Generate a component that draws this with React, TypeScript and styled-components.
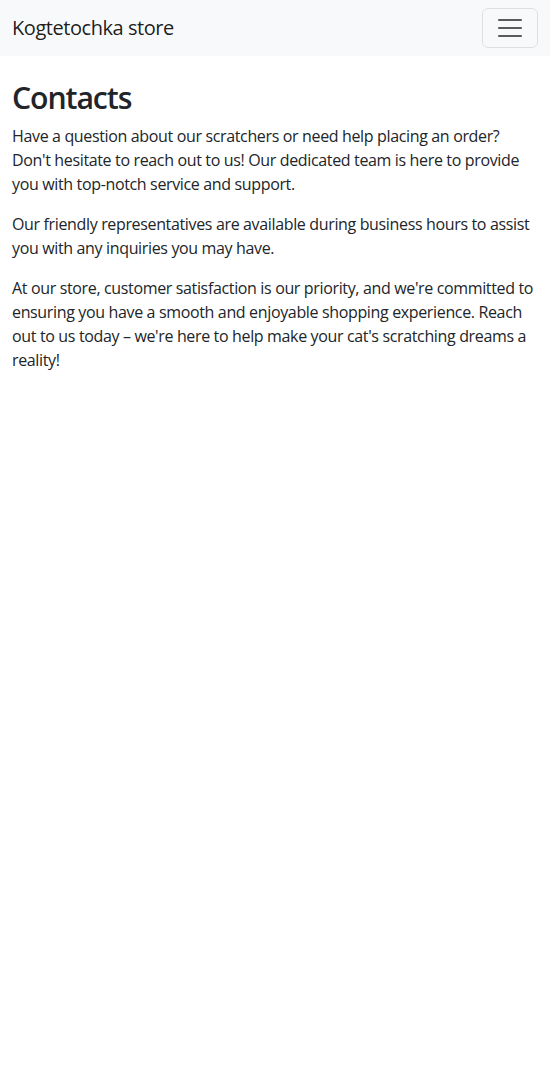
import React from "react";
import styled, { createGlobalStyle } from "styled-components";

const Global = createGlobalStyle`
  * { box-sizing: border-box; }
  body {
    margin: 0;
    font-family: "Segoe UI", "Open Sans", sans-serif;
    font-size: 16px;
    line-height: 1.5;
    color: #212529;
    background: #fff;
  }
`;

const Navbar = styled.nav`
  background: #f8f9fa;
  padding: 8px 0;
`;

const NavInner = styled.div`
  display: flex;
  align-items: center;
  justify-content: space-between;
  padding: 0 12px;
`;

const Brand = styled.a`
  font-size: 20px;
  line-height: 30px;
  padding: 5px 0;
  letter-spacing: -0.45px;
  color: rgba(0, 0, 0, 0.9);
  text-decoration: none;
`;

const Toggler = styled.button`
  width: 56px;
  height: 40px;
  padding: 4px 12px;
  border: 1px solid rgba(0, 0, 0, 0.1);
  border-radius: 6px;
  background: transparent;
  display: flex;
  align-items: center;
  justify-content: center;
`;

const Container = styled.main`
  padding: 0 12px;
  margin-top: 24px;
`;

const Title = styled.h1`
  margin: 0 0 8px;
  font-size: 30.25px;
  font-weight: 600;
  line-height: 1.2;
  letter-spacing: -1.1px;
`;

const Para = styled.p`
  margin: 0 0 16px;
  letter-spacing: -0.35px;
`;

export default function App() {
  return (
    <>
      <Global />
      <Navbar>
        <NavInner>
          <Brand href="#">Kogtetochka store</Brand>
          <Toggler aria-label="Toggle navigation">
            <svg width="30" height="30" viewBox="0 0 30 30">
              <path
                stroke="rgba(33,37,41,0.75)"
                strokeLinecap="round"
                strokeMiterlimit="10"
                strokeWidth="2"
                d="M4 7h22M4 15h22M4 23h22"
              />
            </svg>
          </Toggler>
        </NavInner>
      </Navbar>
      <Container>
        <Title>Contacts</Title>
        <Para>
          Have a question about our scratchers or need help placing an order? Don't hesitate to reach out to us! Our dedicated team is here to provide you with top-notch service and support.
        </Para>
        <Para>
          Our friendly representatives are available during business hours to assist you with any inquiries you may have.
        </Para>
        <Para>
          At our store, customer satisfaction is our priority, and we're committed to ensuring you have a smooth and enjoyable shopping experience. Reach out to us today – we're here to help make your cat's scratching dreams a reality!
        </Para>
      </Container>
    </>
  );
}
